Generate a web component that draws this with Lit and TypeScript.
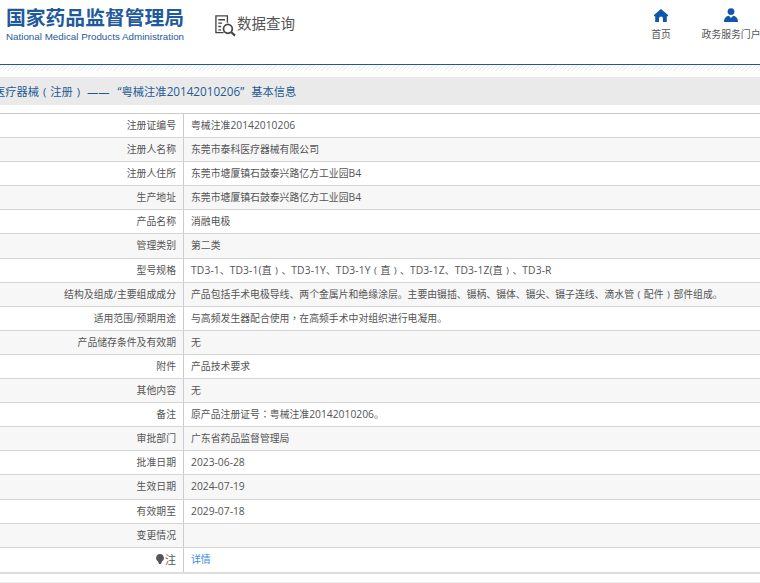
import { LitElement, html, css } from "lit";
import { customElement } from "lit/decorators.js";

const rows: [string, string][] = [
  ["注册证编号", "粤械注准20142010206"],
  ["注册人名称", "东莞市泰科医疗器械有限公司"],
  ["注册人住所", "东莞市塘厦镇石鼓泰兴路亿方工业园B4"],
  ["生产地址", "东莞市塘厦镇石鼓泰兴路亿方工业园B4"],
  ["产品名称", "消融电极"],
  ["管理类别", "第二类"],
  ["型号规格", "TD3-1、TD3-1(直）、TD3-1Y、TD3-1Y（直）、TD3-1Z、TD3-1Z(直）、TD3-R"],
  ["结构及组成/主要组成成分", "产品包括手术电极导线、两个金属片和绝缘涂层。主要由镊插、镊柄、镊体、镊尖、镊子连线、滴水管（配件）部件组成。"],
  ["适用范围/预期用途", "与高频发生器配合使用，在高频手术中对组织进行电凝用。"],
  ["产品储存条件及有效期", "无"],
  ["附件", "产品技术要求"],
  ["其他内容", "无"],
  ["备注", "原产品注册证号：粤械注准20142010206。"],
  ["审批部门", "广东省药品监督管理局"],
  ["批准日期", "2023-06-28"],
  ["生效日期", "2024-07-19"],
  ["有效期至", "2029-07-18"],
  ["变更情况", ""],
];

/* Latin runs are set a little larger than CJK; full-width punctuation is centred in its box. */
function runs(text: string) {
  return text.split(/([A-Za-z0-9\-“”()]+|[（），：])/).filter(Boolean).map((t) => {
    if (t === "（") return html`<span class="box">(</span>`;
    if (t === "）") return html`<span class="box">)</span>`;
    if (t === "，" || t === "：") return html`<span class="mid">${t}</span>`;
    if (/^[A-Za-z0-9\-“”()]+$/.test(t)) return html`<span class="lat">${t}</span>`;
    return t;
  });
}

@customElement("app-root")
export class AppRoot extends LitElement {
  static styles = css`
    :host {
      display: block;
      width: 760px;
      height: 583px;
      overflow: hidden;
      background: #fff;
      font-family: "Open Sans", "Noto Sans CJK SC", sans-serif;
      color: #555;
    }
    .header {
      display: flex;
      height: 64px;
      border-bottom: 1px solid #1f5a94;
    }
    .logo {
      margin: 6px 0 0 6px;
      width: 179px;
      color: #1f5a9c;
      font-family: "Liberation Sans", "Noto Sans CJK SC", sans-serif;
    }
    .logo-cn {
      font-size: 19.8px;
      font-weight: 700;
      line-height: 24px;
      white-space: nowrap;
    }
    .logo-en {
      font-size: 9.8px;
      line-height: 13px;
      white-space: nowrap;
    }
    .query {
      display: flex;
      align-items: center;
      margin: 10px 0 0 29px;
      height: 24px;
      font-size: 14.5px;
      color: #555;
      white-space: nowrap;
    }
    .query svg { margin-top: 7px; }
    .nav {
      margin-left: auto;
      display: flex;
    }
    .nav-item {
      display: flex;
      flex-direction: column;
      align-items: center;
      padding-top: 8px;
      font-size: 9.85px;
      line-height: 14px;
      color: #555;
      white-space: nowrap;
    }
    .nav-item.home { width: 20px; margin-right: 31px; }
    .nav-item.portal { width: 58px; }
    .nav-item svg { margin-bottom: 5px; }
    .hatch {
      height: 6px;
      background: repeating-linear-gradient(135deg, #edf2f7 0 1px, #fff 1px 3px);
    }
    .crumb {
      margin: 6px 0 8px;
      height: 28px;
      background: #eaeaea;
      display: flex;
      align-items: center;
      font-size: 11.26px;
      color: #1f5a94;
      white-space: nowrap;
      overflow: hidden;
    }
    .crumb .inner { margin-left: -6px; }
    .crumb .lat { font-size: 11.7px; }
    .crumb .dash { margin: 0 8px 0 3px; }
    .crumb .end { margin-left: 7px; }
    .table { border-top: 1px solid #ccc; }
    .row {
      display: grid;
      grid-template-columns: 184px 1fr;
      height: 23.1px;
      border-bottom: 1px solid #d4d4d4;
      font-size: 9.85px;
      line-height: 23px;
      white-space: nowrap;
    }
    .row:nth-child(even) { background: #f7f7f7; }
    .k {
      text-align: right;
      padding-right: 7px;
      border-right: 1px solid #ccc;
    }
    .v { padding-left: 7px; overflow: hidden; }
    .v.model .lat { letter-spacing: 0.12px; }
    .lat { font-size: 10.3px; }
    .box { display: inline-block; width: 1em; text-align: center; }
    .mid { font-family: "Noto Sans CJK TC", sans-serif; }
    .link { color: #3b8ae0; }
    .row.last { border-bottom: 2px solid #ddd; height: 24px; }
    .note { display: inline-flex; align-items: center; gap: 1px; font-size: 11px; }
    .foot { margin-top: 8px; border-top: 1px solid #eee; }
  `;

  render() {
    return html`
      <div class="header">
        <div class="logo">
          <div class="logo-cn">国家药品监督管理局</div>
          <div class="logo-en">National Medical Products Administration</div>
        </div>
        <div class="query">
          <svg width="23" height="23" viewBox="0 0 24 24" fill="none" stroke="#444" stroke-width="1.4">
            <path d="M10 19.5H2V2h12v7" />
            <path d="M4.5 6h7M4.5 9.5h4M4.5 13h3M4.5 16.5h3" />
            <circle cx="14.5" cy="15.5" r="4.6" stroke-width="1.8" />
            <path d="M18 19l4 3.6" stroke-width="2.2" />
          </svg>
          <span>数据查询</span>
        </div>
        <div class="nav">
          <div class="nav-item home">
            <svg width="14" height="14" viewBox="0 0 14 14" fill="#0f56ad"><path d="M7 1L0 7V8.2H1.2V14H5V10.5A2 2 0 0 1 9 10.5V14H12.8V8.2H14V7Z" /></svg>
            首页
          </div>
          <div class="nav-item portal">
            <svg width="14" height="14" viewBox="0 0 14 14" fill="#0f56ad"><circle cx="7" cy="3.6" r="3.4" /><path d="M0 14C0 10 2.5 8 4.8 7.8L7 10L9.2 7.8C11.5 8 14 10 14 14Z" /></svg>
            政务服务门户
          </div>
        </div>
      </div>
      <div class="hatch"></div>
      <div class="crumb">
        <span class="inner">医疗器械${runs("（注册）")}<span class="dash">——</span><span class="lat">“</span>${runs("粤械注准20142010206”")}<span class="end">基本信息</span></span>
      </div>
      <div class="table">
        ${rows.map(([k, v]) => html`
          <div class="row"><div class="k">${k}</div><div class="v ${k === "型号规格" ? "model" : ""}">${runs(v)}</div></div>
        `)}
        <div class="row last">
          <div class="k"><span class="note"><svg width="8" height="10" viewBox="0 0 8 10" fill="#555"><path d="M4 0a4 4 0 0 1 2 7.4L5 10H3L2 7.4A4 4 0 0 1 4 0Z" /></svg>注</span></div>
          <div class="v"><span class="link">详情</span></div>
        </div>
        <div class="foot"></div>
      </div>
    `;
  }
}
